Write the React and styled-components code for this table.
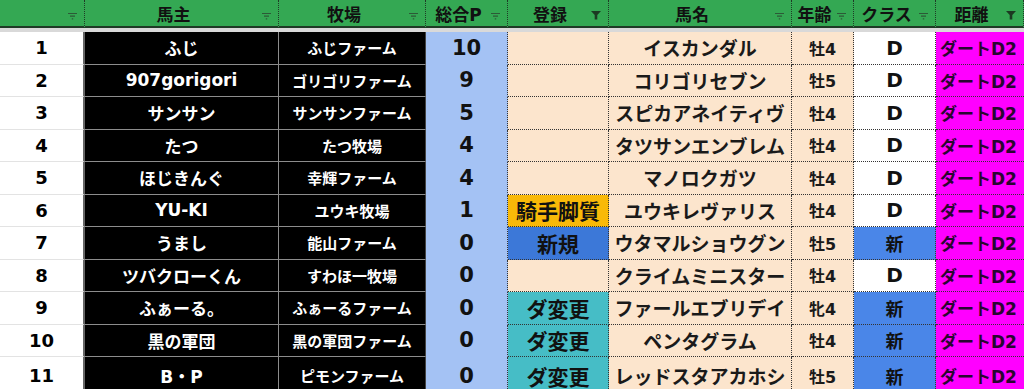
import React from 'react';
import styled, { createGlobalStyle } from 'styled-components';

const Global = createGlobalStyle`
  html, body { margin: 0; padding: 0; background: #fff; overflow: hidden; }
  body { font-family: "DejaVu Sans", "Noto Sans CJK JP", sans-serif; }
`;

const Sheet = styled.div`
  display: grid;
  grid-template-columns: 85px 194px 147px 82px 101px 183px 62px 82px 88px;
  grid-template-rows: 28px 4px repeat(10, 32.5px) 38px;
  width: 1024px;
  height: 389px;
  overflow: hidden;
`;

const HeadCell = styled.div`
  position: relative;
  display: flex;
  align-items: center;
  justify-content: center;
  padding-right: 16px;
  background: #34a853;
  color: #111;
  font-size: 17px;
  font-weight: 700;
  border-bottom: 2px solid #1f3a26;
  border-right: 1px dotted #1f3a26;
  box-sizing: border-box;
  white-space: nowrap;
`;

const FilterMark = styled.svg`
  position: absolute;
  right: 6px;
  bottom: 6px;
`;

const Band = styled.div`
  grid-column: 1 / -1;
  background: #d9d9d9;
`;

const kinds = {
  num: { bg: '#fff', color: '#000', size: 18, line: '1px solid #e3e3e3', side: '2px solid #666' },
  owner: { bg: '#000', color: '#fff', size: 17, line: '1px solid #8c8c8c', side: '1px solid #8c8c8c' },
  farm: { bg: '#000', color: '#fff', size: 15, line: '1px solid #8c8c8c', side: '1px solid #444' },
  point: { bg: '#a4c2f4', color: '#111', size: 21, line: '1px solid #a4c2f4', side: '1px dotted #333' },
  reg: { bg: '#fce5cd', color: '#111', size: 21, line: '1px dotted #333', side: '1px dotted #333' },
  horse: { bg: '#fce5cd', color: '#1a1a1a', size: 19, line: '1px dotted #333', side: '1px dotted #333' },
  age: { bg: '#fce5cd', color: '#1a1a1a', size: 16, line: '1px dotted #333', side: '1px dotted #333' },
  cls: { bg: '#fff', color: '#111', size: 20, line: '1px dotted #333', side: '1px dotted #333' },
  dist: { bg: '#ff00ff', color: '#2a0630', size: 17, line: '1px dotted #333', side: 'none' },
};

const Cell = styled.div`
  display: flex;
  align-items: center;
  justify-content: ${p => (p.$kind === 'dist' ? 'flex-start' : 'center')};
  padding-left: ${p => (p.$kind === 'dist' ? '4px' : '0')};
  background: ${p => p.$bg || kinds[p.$kind].bg};
  color: ${p => kinds[p.$kind].color};
  font-size: ${p => p.$size || kinds[p.$kind].size}px;
  font-weight: 700;
  border-bottom: ${p => kinds[p.$kind].line};
  border-right: ${p => kinds[p.$kind].side};
  box-sizing: border-box;
  white-space: nowrap;
  overflow: hidden;
`;

const Filter = ({ active }) =>
  active ? (
    <FilterMark width="12" height="10" viewBox="0 0 12 10">
      <path d="M1 1 H11 L7.3 5 V9.5 H4.7 V5 Z" fill="#1c3a22" />
    </FilterMark>
  ) : (
    <FilterMark width="11" height="8" viewBox="0 0 11 8">
      <path d="M1 1.5 H10 M3 4.2 H8 M4.8 6.8 H6.2" stroke="#2c5a37" strokeWidth="1.2" />
    </FilterMark>
  );

const headers = [
  { label: '' },
  { label: '馬主' },
  { label: '牧場' },
  { label: '総合P' },
  { label: '登録', active: true },
  { label: '馬名' },
  { label: '年齢' },
  { label: 'クラス' },
  { label: '距離', active: true },
];

const tagColors = {
  騎手脚質: '#f9b908',
  新規: '#3c78d8',
  ダ変更: '#46bdc6',
};

const rows = [
  ['1', 'ふじ', 'ふじファーム', '10', '', 'イスカンダル', '牡4', 'D'],
  ['2', '907gorigori', 'ゴリゴリファーム', '9', '', 'コリゴリセブン', '牡5', 'D'],
  ['3', 'サンサン', 'サンサンファーム', '5', '', 'スピカアネイティヴ', '牡4', 'D'],
  ['4', 'たつ', 'たつ牧場', '4', '', 'タツサンエンブレム', '牡4', 'D'],
  ['5', 'ほじきんぐ', '幸輝ファーム', '4', '', 'マノロクガツ', '牡4', 'D'],
  ['6', 'YU-KI', 'ユウキ牧場', '1', '騎手脚質', 'ユウキレヴァリス', '牡4', 'D'],
  ['7', 'うまし', '能山ファーム', '0', '新規', 'ウタマルショウグン', '牡5', '新'],
  ['8', 'ツバクローくん', 'すわほ一牧場', '0', '', 'クライムミニスター', '牡4', 'D'],
  ['9', 'ふぁーる。', 'ふぁーるファーム', '0', 'ダ変更', 'ファールエブリデイ', '牝4', '新'],
  ['10', '黒の軍団', '黒の軍団ファーム', '0', 'ダ変更', 'ペンタグラム', '牡4', '新'],
  ['11', 'B・P', 'ピモンファーム', '0', 'ダ変更', 'レッドスタアカホシ', '牡5', '新'],
];

export default function App() {
  return (
    <>
      <Global />
      <Sheet>
        {headers.map((h, i) => (
          <HeadCell key={i}>
            {h.label}
            <Filter active={h.active} />
          </HeadCell>
        ))}
        <Band />
        {rows.map(r => {
          const isNew = r[7] === '新';
          return (
            <React.Fragment key={r[0]}>
              <Cell $kind="num">{r[0]}</Cell>
              <Cell $kind="owner">{r[1]}</Cell>
              <Cell $kind="farm">{r[2]}</Cell>
              <Cell $kind="point">{r[3]}</Cell>
              <Cell $kind="reg" $bg={tagColors[r[4]]}>{r[4]}</Cell>
              <Cell $kind="horse">{r[5]}</Cell>
              <Cell $kind="age">{r[6]}</Cell>
              <Cell $kind="cls" $bg={isNew ? '#4a86e8' : undefined} $size={isNew ? 18 : undefined}>
                {r[7]}
              </Cell>
              <Cell $kind="dist">ダートD2</Cell>
            </React.Fragment>
          );
        })}
      </Sheet>
    </>
  );
}
